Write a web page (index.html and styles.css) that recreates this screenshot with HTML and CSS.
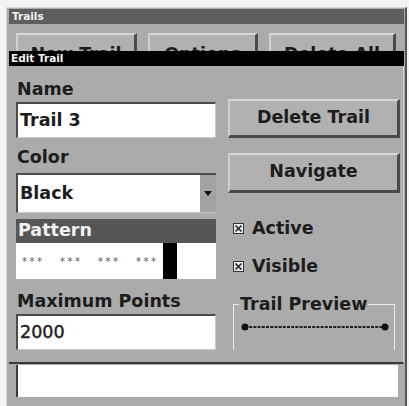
FILE: index.html
```html
<!DOCTYPE html>
<html>
<head>
<meta charset="utf-8">
<link rel="stylesheet" href="styles.css">
</head>
<body>
<div class="window">
  <div class="titlebar">Trails</div>
  <div class="toolbar">
    <div class="btn tb-new">New Trail</div>
    <div class="btn tb-opt">Options</div>
    <div class="btn tb-del">Delete All</div>
  </div>
  <div class="dialog">
    <div class="dlg-title">Edit Trail</div>
    <div class="dlg-body">
      <div class="col-left">
        <div class="label lbl-name">Name</div>
        <div class="field f-name">Trail 3</div>
        <div class="label lbl-color">Color</div>
        <div class="select">
          <div class="select-text">Black</div>
          <div class="select-arrow">
            <svg width="8" height="5" viewBox="0 0 8 5"><polygon points="0,0 8,0 4,5" fill="#111"/></svg>
          </div>
        </div>
        <div class="pattern-head">Pattern</div>
        <div class="pattern-field">
          <span class="stars">***</span>
          <span class="stars">***</span>
          <span class="stars">***</span>
          <span class="stars">***</span>
          <span class="pattern-bar"></span>
        </div>
        <div class="label lbl-max">Maximum Points</div>
        <div class="field f-max">2000</div>
      </div>
      <div class="col-right">
        <div class="btn dbtn btn-delete">Delete Trail</div>
        <div class="btn dbtn btn-nav">Navigate</div>
        <div class="check chk-active">
          <svg class="cbox" width="11" height="11" viewBox="0 0 11 11"><rect x="0.5" y="0.5" width="10" height="10" fill="#eee" stroke="#333"/><path d="M2.5 2.5 L8.5 8.5 M8.5 2.5 L2.5 8.5" stroke="#222" stroke-width="1.6"/></svg>
          <span>Active</span>
        </div>
        <div class="check chk-visible">
          <svg class="cbox" width="11" height="11" viewBox="0 0 11 11"><rect x="0.5" y="0.5" width="10" height="10" fill="#eee" stroke="#333"/><path d="M2.5 2.5 L8.5 8.5 M8.5 2.5 L2.5 8.5" stroke="#222" stroke-width="1.6"/></svg>
          <span>Visible</span>
        </div>
        <fieldset class="preview">
          <legend>Trail Preview</legend>
          <svg class="preview-line" width="148" height="10" viewBox="0 0 148 10">
            <line x1="4" y1="5" x2="144" y2="5" stroke="#222" stroke-width="2" stroke-dasharray="3 1.2"/>
            <circle cx="4" cy="5" r="3.5" fill="#111"/>
            <circle cx="144" cy="5" r="3.5" fill="#111"/>
          </svg>
        </fieldset>
      </div>
    </div>
  </div>
  <div class="bottom-field"></div>
</div>
</body>
</html>
```
FILE: styles.css
```css
html, body {
  margin: 0;
  padding: 0;
  background: #f4f4f4;
}
body {
  font-family: "DejaVu Sans", "Liberation Sans", sans-serif;
  color: #1c1c1c;
}
.window {
  margin: 7px 2px 0 6px;
  height: 399px;
  box-sizing: border-box;
  background: #ababab;
  border-left: 1px solid #dcdcdc;
  border-top: 1px solid #dcdcdc;
  border-right: 2px solid #555;
  padding: 1px 1px 0 2px;
  display: flex;
  flex-direction: column;
}
.titlebar {
  height: 15px;
  background: #5e5e5e;
  color: #f2f2f2;
  font-size: 10.5px;
  font-weight: bold;
  line-height: 15px;
  padding-left: 3px;
}
.toolbar {
  height: 27px;
  overflow: hidden;
  display: flex;
  gap: 11px;
  padding: 9px 0 0 7px;
  box-sizing: border-box;
}
.btn {
  box-sizing: border-box;
  background: #b1b1b1;
  border-top: 2px solid #d6d6d6;
  border-left: 2px solid #d0d0d0;
  border-right: 3px solid #4a4a4a;
  border-bottom: 3px solid #4a4a4a;
  font-size: 17.5px;
  font-weight: bold;
  text-align: center;
  flex: none;
}
.toolbar .btn {
  height: 38px;
  line-height: 38px;
}
.tb-new { width: 121px; }
.tb-opt { width: 110px; }
.tb-del { width: 127px; }
.dialog {
  display: flex;
  flex-direction: column;
}
.dlg-title {
  height: 15px;
  background: #000;
  color: #f4f4f4;
  font-size: 10.5px;
  font-weight: bold;
  line-height: 15px;
  padding-left: 2px;
}
.dlg-body {
  display: flex;
  gap: 12px;
  padding: 0 0 12px 7px;
  border-bottom: 2px solid #3a3a3a;
  border-right: 1px solid #d4d4d4;
  height: 298px;
  box-sizing: border-box;
}
.col-left {
  width: 200px;
  display: flex;
  flex-direction: column;
}
.col-right {
  width: 172px;
  display: flex;
  flex-direction: column;
}
.label {
  font-size: 17.5px;
  font-weight: bold;
  line-height: 20px;
  height: 20px;
  padding-left: 1px;
}
.lbl-name { margin-top: 13px; }
.lbl-color { margin-top: 9px; }
.lbl-max { margin-top: 12px; }
.field {
  box-sizing: border-box;
  height: 36px;
  background: #fff;
  border-top: 2px solid #4c4c4c;
  border-left: 2px solid #4c4c4c;
  border-right: 1px solid #c8c8c8;
  border-bottom: 1px solid #c8c8c8;
  font-size: 17.5px;
  font-weight: bold;
  line-height: 33px;
  padding-left: 2px;
}
.f-name { margin-top: 3px; }
.f-max { margin-top: 3px; font-weight: normal; -webkit-text-stroke: 0.4px #1c1c1c; }
.select {
  margin-top: 6px;
  height: 40px;
  box-sizing: border-box;
  display: flex;
  background: #fff;
  border-top: 2px solid #4c4c4c;
  border-left: 2px solid #4c4c4c;
  border-bottom: 1px solid #c8c8c8;
}
.select-text {
  flex: 1;
  font-size: 17.5px;
  font-weight: bold;
  line-height: 36px;
  padding-left: 2px;
}
.select-arrow {
  width: 16px;
  background: #a2a2a2;
  display: flex;
  align-items: center;
  justify-content: center;
}
.pattern-head {
  margin-top: 6px;
  height: 24px;
  background: #565656;
  color: #f0f0f0;
  font-size: 17.5px;
  font-weight: bold;
  line-height: 23px;
  padding-left: 2px;
}
.pattern-field {
  height: 36px;
  background: #fff;
  display: flex;
  align-items: center;
  padding-left: 6px;
  gap: 16px;
}
.stars {
  font-size: 10px;
  color: #555;
  letter-spacing: 2.5px;
  margin-top: 0;
  width: 22px;
}
.pattern-bar {
  align-self: stretch;
  width: 14px;
  background: #000;
  margin-left: -11px;
}
.dbtn {
  height: 39px;
  line-height: 33px;
}
.btn-delete { margin-top: 33px; }
.btn-nav { margin-top: 15px; height: 40px; }
.check {
  display: flex;
  align-items: center;
  gap: 8px;
  height: 20px;
  padding-left: 5px;
  font-size: 17.5px;
  font-weight: bold;
}
.cbox { flex: none; }
.chk-active { margin-top: 25px; }
.chk-visible { margin-top: 18px; }
.preview {
  margin: 18px 0 0 5px;
  width: 162px;
  height: 56px;
  box-sizing: border-box;
  padding: 0 0 0 7px;
  border: 1px solid #ececec;
  border-bottom: none;
  min-width: 0;
}
.preview legend {
  font-size: 17.5px;
  font-weight: bold;
  line-height: 20px;
  padding: 0 1px;
  margin-left: -2px;
}
.preview-line {
  display: block;
  margin-top: 8px;
  margin-left: 0;
}
.bottom-field {
  margin: 1px 0 0 7px;
  width: 382px;
  height: 32px;
  background: #fff;
  border-left: 2px solid #3c3c3c;
  box-sizing: border-box;
}
```
